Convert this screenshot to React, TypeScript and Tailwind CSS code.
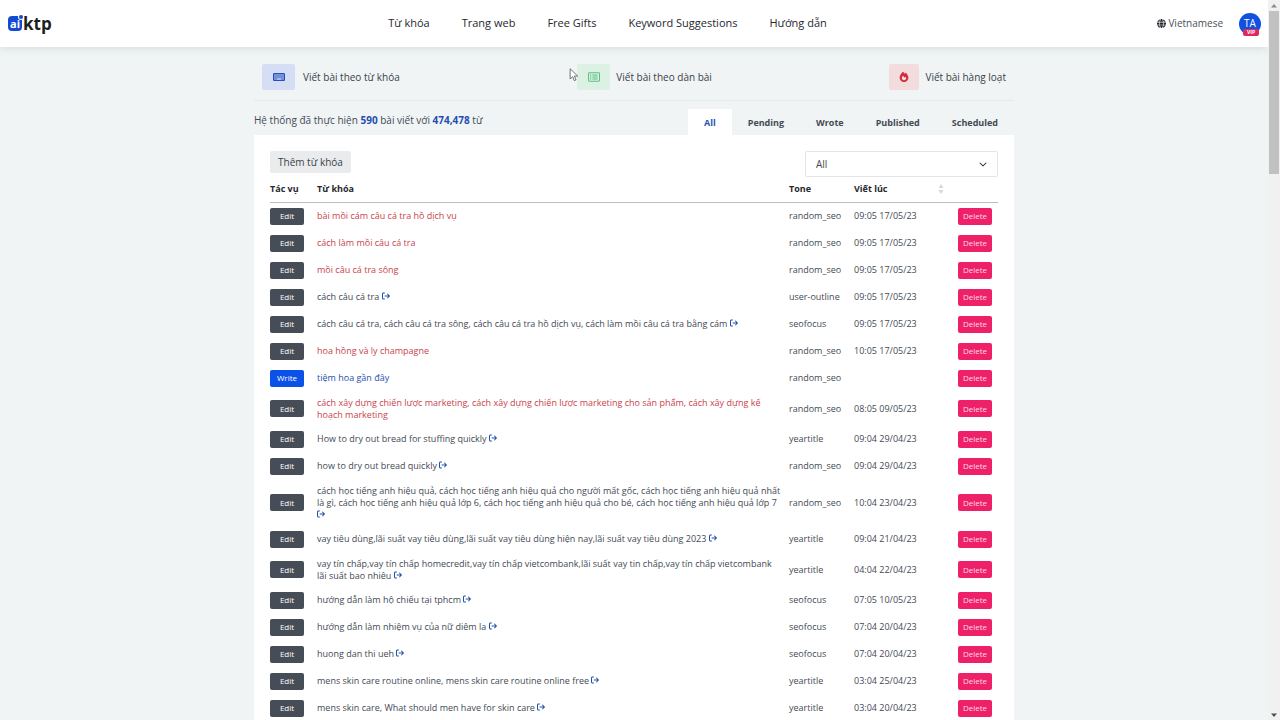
import React, { useState } from "react";
import {
  FaArrowRightFromBracket,
  FaChevronDown,
  FaFire,
  FaGlobe,
  FaKeyboard,
  FaRegRectangleList,
} from "react-icons/fa6";

type Status = "wrote" | "failed" | "pending";

interface Article {
  id: number;
  keyword: string;
  tone: string;
  writtenAt: string;
  status: Status;
}

const articles: Article[] = [
  { id: 1, keyword: "bài mồi cám câu cá tra hồ dịch vụ", tone: "random_seo", writtenAt: "09:05 17/05/23", status: "failed" },
  { id: 2, keyword: "cách làm mồi câu cá tra", tone: "random_seo", writtenAt: "09:05 17/05/23", status: "failed" },
  { id: 3, keyword: "mồi câu cá tra sông", tone: "random_seo", writtenAt: "09:05 17/05/23", status: "failed" },
  { id: 4, keyword: "cách câu cá tra", tone: "user-outline", writtenAt: "09:05 17/05/23", status: "wrote" },
  { id: 5, keyword: "cách câu cá tra, cách câu cá tra sông, cách câu cá tra hồ dịch vụ, cách làm mồi câu cá tra bằng cám", tone: "seofocus", writtenAt: "09:05 17/05/23", status: "wrote" },
  { id: 6, keyword: "hoa hồng và ly champagne", tone: "random_seo", writtenAt: "10:05 17/05/23", status: "failed" },
  { id: 7, keyword: "tiệm hoa gần đây", tone: "random_seo", writtenAt: "", status: "pending" },
  { id: 8, keyword: "cách xây dựng chiến lược marketing, cách xây dựng chiến lược marketing cho sản phẩm, cách xây dựng kế hoạch marketing", tone: "random_seo", writtenAt: "08:05 09/05/23", status: "failed" },
  { id: 9, keyword: "How to dry out bread for stuffing quickly", tone: "yeartitle", writtenAt: "09:04 29/04/23", status: "wrote" },
  { id: 10, keyword: "how to dry out bread quickly", tone: "random_seo", writtenAt: "09:04 29/04/23", status: "wrote" },
  { id: 11, keyword: "cách học tiếng anh hiệu quả, cách học tiếng anh hiệu quả cho người mất gốc, cách học tiếng anh hiệu quả nhất là gì, cách học tiếng anh hiệu quả lớp 6, cách học tiếng anh hiệu quả cho bé, cách học tiếng anh hiệu quả lớp 7", tone: "random_seo", writtenAt: "10:04 23/04/23", status: "wrote" },
  { id: 12, keyword: "vay tiêu dùng,lãi suất vay tiêu dùng,lãi suất vay tiêu dùng hiện nay,lãi suất vay tiêu dùng 2023", tone: "yeartitle", writtenAt: "09:04 21/04/23", status: "wrote" },
  { id: 13, keyword: "vay tín chấp,vay tín chấp homecredit,vay tín chấp vietcombank,lãi suất vay tin chấp,vay tín chấp vietcombank lãi suất bao nhiêu", tone: "yeartitle", writtenAt: "04:04 22/04/23", status: "wrote" },
  { id: 14, keyword: "hướng dẫn làm hộ chiếu tại tphcm", tone: "seofocus", writtenAt: "07:05 10/05/23", status: "wrote" },
  { id: 15, keyword: "hướng dẫn làm nhiệm vụ của nữ diêm la", tone: "seofocus", writtenAt: "07:04 20/04/23", status: "wrote" },
  { id: 16, keyword: "huong dan thi ueh", tone: "seofocus", writtenAt: "07:04 20/04/23", status: "wrote" },
  { id: 17, keyword: "mens skin care routine online, mens skin care routine online free", tone: "yeartitle", writtenAt: "03:04 25/04/23", status: "wrote" },
  { id: 18, keyword: "mens skin care, What should men have for skin care", tone: "yeartitle", writtenAt: "03:04 20/04/23", status: "wrote" },
];

const navItems = ["Từ khóa", "Trang web", "Free Gifts", "Keyword Suggestions", "Hướng dẫn"];
const tabs = ["All", "Pending", "Wrote", "Published", "Scheduled"];

const keywordColor: Record<Status, string> = {
  wrote: "text-[#434a54]",
  failed: "text-[#c9434b]",
  pending: "text-[#1f4fae]",
};

const Logo = () => (
  <a href="#" aria-label="aiktp" className="flex items-center text-[#1c1e22]">
    <span className="relative flex h-[15px] w-[14px] items-center justify-center rounded bg-[#124bd0] text-[11px] leading-none font-bold text-white">
      ai
      <span className="absolute -top-px -right-px size-1 rounded-full bg-[#124bd0] ring-1 ring-white" />
    </span>
    <span className="ml-px text-[17px] leading-5 font-bold">ktp</span>
  </a>
);

const Header = () => (
  <header className="relative z-10 flex h-[47px] items-center bg-white pr-[7px] pl-2 shadow-[0_2px_8px_rgba(60,70,80,0.12)]">
    <div className="flex-1">
      <Logo />
    </div>
    <nav className="mr-[54px] flex gap-8 text-[11px] font-medium text-[#25292e]">
      {navItems.map((item) => (
        <a key={item} href="#">
          {item}
        </a>
      ))}
    </nav>
    <div className="flex flex-1 items-center justify-end gap-4">
      <button className="flex items-center gap-0.5 text-[10px] text-[#4a5058]">
        <FaGlobe className="size-[9px] text-[#25292e]" />
        Vietnamese
      </button>
      <button className="relative flex size-[22px] items-center justify-center rounded-full bg-[#1151e0] text-[10px] text-white">
        TA
        <span className="absolute -bottom-px left-1 rounded-xs bg-[#e0285f] px-1 text-[5px] leading-[7px] font-bold">
          VIP
        </span>
      </button>
    </div>
  </header>
);

const Cursor = () => (
  <svg viewBox="0 0 12 18" className="absolute top-1 -left-2 h-[14px] w-[10px]">
    <path
      d="M1 1v13l3.2-2.8 2.2 5 2.2-1-2.2-4.8h4.4z"
      fill="#fff"
      stroke="#4b4f55"
      strokeWidth="1"
    />
  </svg>
);

const Shortcuts = () => (
  <div className="flex justify-between border-b border-[#e4e9eb] px-2 pb-[10px] text-[10px] font-medium text-[#3b4148]">
    <a href="#" className="flex items-center gap-2">
      <span className="flex h-[26px] w-[33px] items-center justify-center rounded-xs bg-[#d6def5]">
        <FaKeyboard className="size-3 text-[#2350bd]" />
      </span>
      Viết bài theo từ khóa
    </a>
    <a href="#" className="relative flex items-center gap-1.5">
      <span className="flex h-[26px] w-[33px] items-center justify-center rounded-xs bg-[#dcf1e4]">
        <FaRegRectangleList className="size-3 text-[#55c280]" />
      </span>
      Viết bài theo dàn bài
      <Cursor />
    </a>
    <a href="#" className="flex items-center gap-1.5">
      <span className="flex h-[26px] w-[30px] items-center justify-center rounded-xs bg-[#f3dcde]">
        <FaFire className="size-[10px] text-[#d12f3b]" />
      </span>
      Viết bài hàng loạt
    </a>
  </div>
);

const ArticleRow = ({ article }: { article: Article }) => (
  <tr>
    <td className="py-[5px]">
      <button
        className={`block h-[17px] w-[34px] rounded-xs text-[8px] font-medium text-white ${
          article.status === "pending" ? "bg-[#0d52e8]" : "bg-[#464d56]"
        }`}
      >
        {article.status === "pending" ? "Write" : "Edit"}
      </button>
    </td>
    <td className={`py-[5px] pr-2 ${keywordColor[article.status]}`}>
      {article.keyword}
      {article.status === "wrote" && (
        <>
          {" "}
          <a href="#" aria-label="Open article" className="inline-block align-baseline text-[#1f4fae]">
            <FaArrowRightFromBracket className="size-2" />
          </a>
        </>
      )}
    </td>
    <td className="py-[5px]">{article.tone}</td>
    <td className="py-[5px]">{article.writtenAt}</td>
    <td className="py-[5px]">
      <button className="ml-2 block h-[17px] w-[34px] rounded-xs bg-[#ee2168] text-[8px] font-medium text-[#ffd9e5]">
        Delete
      </button>
    </td>
  </tr>
);

const App = () => {
  const [activeTab, setActiveTab] = useState("All");
  const [filter, setFilter] = useState("All");

  return (
    <div className="flex h-screen overflow-hidden bg-[#f0f4f5] font-['Open_Sans','Noto_Sans',sans-serif] text-[#434a54]">
      <div className="min-w-0 flex-1 overflow-hidden">
        <Header />
        <main className="mx-auto max-w-[760px] pt-[17px]">
          <Shortcuts />

          <div className="flex items-end justify-between pt-2">
            <p className="pb-2 text-[10px] leading-[14px]">
              Hệ thống đã thực hiện <b className="text-[#1f4fae]">590</b> bài viết với{" "}
              <b className="text-[#1f4fae]">474,478</b> từ
            </p>
            <div role="tablist" className="flex text-[9px] font-bold">
              {tabs.map((tab) => (
                <button
                  key={tab}
                  role="tab"
                  aria-selected={activeTab === tab}
                  onClick={() => setActiveTab(tab)}
                  className={`h-[26px] px-4 pt-0.5 ${
                    activeTab === tab ? "bg-white text-[#1f57b8]" : "text-[#434a54]"
                  }`}
                >
                  {tab}
                </button>
              ))}
            </div>
          </div>

          <section className="bg-white px-4 pt-4">
            <div className="flex items-start justify-between">
              <button className="h-[22px] rounded-xs bg-[#e9ebed] px-2 text-[10px] font-medium text-[#3b4148]">
                Thêm từ khóa
              </button>
              <div className="relative">
                <select
                  aria-label="Filter"
                  value={filter}
                  onChange={(e) => setFilter(e.target.value)}
                  className="block h-[26px] w-[193px] appearance-none rounded-xs border border-[#e1e5e8] bg-white px-[10px] text-[10px]"
                >
                  <option>All</option>
                  <option>Wrote</option>
                </select>
                <FaChevronDown className="pointer-events-none absolute top-[9px] right-[11px] size-2 text-[#25292e]" />
              </div>
            </div>

            <table className="w-full table-fixed text-left text-[9px] leading-3">
              <colgroup>
                <col className="w-[47px]" />
                <col />
                <col className="w-[65px]" />
                <col className="w-[96px]" />
                <col className="w-[48px]" />
              </colgroup>
              <thead className="border-b border-[#b9bdc1] text-[#25292e]">
                <tr className="h-[25px]">
                  <th>Tác vụ</th>
                  <th>Từ khóa</th>
                  <th>Tone</th>
                  <th>
                    <button className="flex w-full items-center justify-between pr-[6px]">
                      Viết lúc
                      <svg viewBox="0 0 6 10" className="h-[10px] w-[6px]" fill="#d5d8db">
                        <path d="M3 0l2.5 4h-5zM3 10L.5 6h5z" />
                      </svg>
                    </button>
                  </th>
                  <th aria-label="Delete" />
                </tr>
              </thead>
              <tbody>
                {articles.map((article) => (
                  <ArticleRow key={article.id} article={article} />
                ))}
              </tbody>
            </table>
          </section>
        </main>
      </div>

      {/* Scrollbar */}
      <div className="flex w-3 flex-col items-center bg-[#f1f1f1]">
        <svg viewBox="0 0 12 11" className="h-[11px] w-3" fill="#8a8a8a">
          <path d="M6 4l3 3.500H3z" />
        </svg>
        <div className="h-[163px] w-[10px] bg-[#c1c1c1]" />
        <svg viewBox="0 0 12 11" className="mt-auto h-[11px] w-3" fill="#505050">
          <path d="M6 8L3 4.500h6z" />
        </svg>
      </div>
    </div>
  );
};

export default App;
